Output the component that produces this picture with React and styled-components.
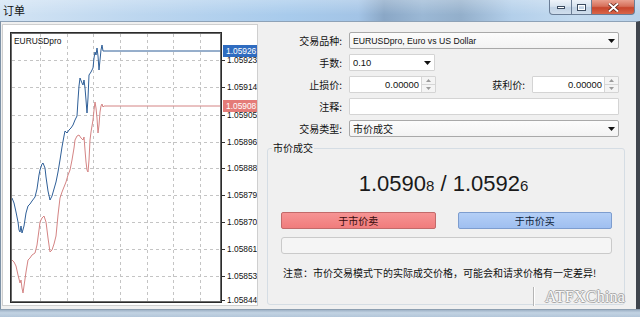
import React from "react";
import styled, { createGlobalStyle } from "styled-components";

const GlobalStyle = createGlobalStyle`
  html, body { margin: 0; padding: 0; }
  body {
    width: 640px; height: 317px; overflow: hidden;
    font-family: "Liberation Sans", "Noto Sans CJK SC", sans-serif;
    background: #b9cde0;
  }
  * { box-sizing: border-box; }
`;

const CJK = `"Noto Sans CJK SC", "Liberation Sans", sans-serif`;
const LAT = `"Liberation Sans", "Noto Sans CJK SC", sans-serif`;

const Window = styled.div`
  position: relative;
  width: 640px;
  height: 317px;
  display: flex;
  flex-direction: column;
  overflow: hidden;
  background: linear-gradient(180deg, #b7cde3 0%, #a9c0d8 100%);
`;

const TitleBar = styled.div`
  flex: none;
  height: 21px;
  display: flex;
  justify-content: space-between;
  align-items: flex-start;
  background:
    linear-gradient(180deg, rgba(255,255,255,0.25), rgba(255,255,255,0) 70%),
    linear-gradient(90deg, #d3e4f4 0%, #bcd6ef 22%, #a8cbec 45%, #a3c4e6 56%, #8aa7c6 60%, #9bb8d5 66%, #93afcb 72%, #b3cfea 80%, #c4dbf0 90%, #b9d2ea 100%);
`;

const Title = styled.div`
  font: 11px ${CJK};
  color: #111;
  padding: 3px 0 0 3px;
  line-height: 14px;
`;

const Controls = styled.div`
  display: flex;
  margin-right: 5px;
`;

const CtrlBtn = styled.div`
  width: ${(p) => p.$w}px;
  height: 15px;
  display: flex;
  align-items: center;
  justify-content: center;
  border: 1px solid #6a7d96;
  border-top: none;
  border-left: ${(p) => (p.$first ? "1px solid #6a7d96" : "none")};
  border-radius: ${(p) => (p.$first ? "0 0 0 4px" : p.$last ? "0 0 4px 0" : "0")};
  background: ${(p) =>
    p.$close
      ? "linear-gradient(180deg, #e9a08f 0%, #d6705a 45%, #c7452c 55%, #d9664a 100%)"
      : "linear-gradient(180deg, #eef3f9 0%, #d7e3ef 45%, #c2d3e5 55%, #d0deed 100%)"};
`;

const Body = styled.div`
  flex: none;
  height: 288px;
  display: flex;
  background: #f0f0f0;
  border-top: 1px solid #8ea2b7;
  border-left: 1px solid #7d91a6;
  border-right: 4px solid #3f454d;
`;

const BottomFrame = styled.div`
  flex: 1;
  background: linear-gradient(180deg, #9fb3c7 0%, #c2d3e3 40%, #b3c6d9 100%);
  border-top: 1px solid #8d9fb1;
`;

const ChartPanel = styled.div`
  flex: none;
  width: 256px;
  height: 282px;
  margin: 2px 0 0 1px;
  background: #fff;
  border: 1px solid #cfcfcf;
  svg { display: block; }
`;

const FormPanel = styled.div`
  flex: 1;
  display: flex;
  flex-direction: column;
  padding: 10px 11px 4px 9px;
`;

const Rows = styled.div`
  display: grid;
  grid-template-columns: 75px 1fr;
  column-gap: 7px;
  row-gap: 5px;
  padding-right: 6px;
`;

const Label = styled.div`
  font: 10px ${CJK};
  line-height: 17px;
  height: 17px;
  text-align: right;
  color: #111;
  white-space: nowrap;
  flex: ${(p) => (p.$grow ? 1 : "none")};
`;

const Field = styled.div`
  height: 17px;
  width: ${(p) => (p.$w ? `${p.$w}px` : "100%")};
  flex: none;
  display: flex;
  align-items: center;
  background: ${(p) => (p.$combo ? "linear-gradient(180deg, #fcfcfc, #f3f3f3)" : "#fff")};
  border: 1px solid ${(p) => (p.$combo ? "#a9a9a9" : "#d4d4d4")};
  border-radius: ${(p) => (p.$combo ? "2px" : "1px")};
  font: ${(p) => (p.$cjk ? `10px ${CJK}` : p.$num ? `9.4px ${LAT}` : `8.7px ${LAT}`)};
  color: #111;
  padding-left: 3px;
`;

const FieldText = styled.span`
  flex: 1;
  text-align: ${(p) => (p.$right ? "right" : "left")};
  padding-right: ${(p) => (p.$right ? "2px" : "0")};
  white-space: nowrap;
  overflow: hidden;
`;

const ArrowBox = styled.span`
  flex: none;
  width: 13px;
  display: flex;
  align-items: center;
  justify-content: center;
`;

const Spinner = styled.span`
  flex: none;
  width: 14px;
  height: 15px;
  display: flex;
  flex-direction: column;
  border-left: 1px solid #d6d6d6;
  background: #f4f4f4;
`;

const SpinHalf = styled.span`
  flex: 1;
  display: flex;
  align-items: center;
  justify-content: center;
  border-bottom: ${(p) => (p.$top ? "1px solid #d6d6d6" : "none")};
`;

const PairRow = styled.div`
  display: flex;
  align-items: center;
  gap: 7px;
`;

const GroupBox = styled.fieldset`
  flex: 1;
  margin: 4px 0 0 0;
  padding: 0 0 0 4px;
  border: 1px solid #d5dde4;
  border-radius: 3px;
  min-width: 0;
`;

const Legend = styled.legend`
  font: 10px ${CJK};
  line-height: 14px;
  padding: 0 1px;
  color: #111;
`;

const GroupContent = styled.div`
  display: flex;
  flex-direction: column;
  padding: 16px 12px 0 9px;
`;

const Price = styled.div`
  font: 22px ${LAT};
  line-height: 26px;
  height: 26px;
  text-align: center;
  color: #1a1a1a;
  padding-right: 6px;
`;

const Small = styled.span`
  font-size: 15px;
`;

const Buttons = styled.div`
  display: grid;
  grid-template-columns: 1fr 1fr;
  column-gap: 22px;
  margin-top: 15px;
`;

const TradeButton = styled.div`
  height: 17px;
  display: flex;
  align-items: center;
  justify-content: center;
  font: 10px ${CJK};
  color: ${(p) => (p.$sell ? "#3a0d0d" : "#0f1f3a")};
  border-radius: 2px;
  border: 1px solid ${(p) => (p.$sell ? "#c26a6a" : "#7d9dcf")};
  background: ${(p) =>
    p.$sell
      ? "linear-gradient(180deg, #f69494 0%, #f07c7c 100%)"
      : "linear-gradient(180deg, #b4cff6 0%, #9fbff0 100%)"};
`;

const Progress = styled.div`
  height: 17px;
  margin-top: 8px;
  border: 1px solid #cacaca;
  border-radius: 3px;
  background: #f5f5f5;
`;

const Note = styled.div`
  margin-top: 12px;
  padding-left: 2px;
  font: 10px ${CJK};
  line-height: 14px;
  color: #111;
  white-space: nowrap;
`;

const Watermark = styled.div`
  position: absolute;
  left: 533px;
  top: 287px;
  height: 19px;
  display: flex;
  align-items: center;
  gap: 11px;
`;

const WmBar = styled.span`
  width: 1px;
  height: 19px;
  background: #b5b5b5;
  box-shadow: 1px 0 0 #fff;
`;

const WmText = styled.span`
  font: 16px "Liberation Serif", serif;
  color: #fafafa;
  letter-spacing: 0.2px;
  text-shadow: 1px 0 0 #a8a8a8, -1px 0 0 #a8a8a8, 0 1px 0 #a8a8a8, 0 -1px 0 #a8a8a8;
`;

const DownArrow = () => (
  <svg width="7" height="4" viewBox="0 0 7 4">
    <path d="M0 0 H7 L3.5 4 Z" fill="#111" />
  </svg>
);

const SpinArrow = ({ up }) => (
  <svg width="5" height="3" viewBox="0 0 5 3">
    <path d={up ? "M0 3 H5 L2.5 0 Z" : "M0 0 H5 L2.5 3 Z"} fill="#9a9a9a" />
  </svg>
);

const SpinField = ({ value, w }) => (
  <Field $w={w} $num>
    <FieldText $right>{value}</FieldText>
    <Spinner>
      <SpinHalf $top>
        <SpinArrow up />
      </SpinHalf>
      <SpinHalf>
        <SpinArrow />
      </SpinHalf>
    </Spinner>
  </Field>
);

const blue = [
  [12, 198], [14, 203], [16, 212], [18, 222], [19, 230], [20, 232], [21, 226], [22, 233], [24, 226],
  [26, 213], [28, 206], [30, 204], [32, 201], [35, 197], [37, 189], [39, 175], [40, 170], [42, 164],
  [43, 163], [45, 168], [46, 177], [48, 191], [50, 200], [52, 196], [54, 189], [56, 182], [58, 172],
  [60, 160], [62, 147], [64, 136], [65, 131], [67, 133], [69, 130], [71, 128], [73, 125], [75, 120],
  [77, 116], [78, 100], [79, 86], [80, 78], [82, 83], [83, 85], [84, 80], [85, 88], [86, 100],
  [87, 113], [88, 98], [89, 75], [91, 72], [93, 68], [94, 58], [95, 52], [96, 55], [97, 48],
  [98, 56], [99, 70], [100, 60], [101, 50], [102, 45], [103, 51], [222, 51],
];

const red = [
  [12, 260], [14, 262], [16, 266], [18, 275], [20, 283], [21, 280], [22, 288], [23, 293], [24, 286],
  [26, 272], [28, 260], [30, 258], [32, 255], [35, 253], [37, 245], [39, 230], [40, 222], [42, 218],
  [44, 216], [46, 222], [48, 238], [50, 252], [52, 250], [54, 244], [56, 236], [58, 215], [60, 198],
  [62, 192], [64, 187], [66, 182], [68, 175], [70, 170], [72, 160], [74, 148], [75, 140], [77, 136],
  [79, 135], [81, 138], [83, 140], [84, 137], [85, 150], [86, 162], [87, 170], [88, 172], [89, 160],
  [90, 140], [91, 132], [93, 120], [94, 110], [95, 102], [96, 108], [97, 118], [98, 133], [99, 125],
  [100, 112], [101, 106], [102, 104], [103, 107], [104, 106], [222, 106],
];

const axis = [
  ["1.05923", 60], ["1.05914", 87], ["1.05905", 115], ["1.05896", 142], ["1.05888", 168],
  ["1.05879", 195], ["1.05870", 222], ["1.05861", 249], ["1.05853", 276], ["1.05844", 300],
];
const vGrid = [40, 67, 93, 120, 147, 173, 200];
const hGrid = [60, 87, 115, 142, 168, 195, 222, 249, 276];

const toPts = (arr) => arr.map(([x, y]) => `${x},${y}`).join(" ");

const Chart = () => (
  <svg width="254" height="280" viewBox="3 25 254 280">
    <rect x="3" y="25" width="254" height="280" fill="#fff" />
    {vGrid.map((x) => (
      <line key={`v${x}`} x1={x + 0.5} y1="34" x2={x + 0.5} y2="302" stroke="#c4c4c4" strokeDasharray="3 3" />
    ))}
    {hGrid.map((y) => (
      <line key={`h${y}`} x1="12" y1={y + 0.5} x2="221" y2={y + 0.5} stroke="#c4c4c4" strokeDasharray="3 3" />
    ))}
    <polyline points={toPts(red)} fill="none" stroke="#d48484" strokeWidth="1" />
    <polyline points={toPts(blue)} fill="none" stroke="#2f5f98" strokeWidth="1" />
    <rect x="10.5" y="32.5" width="211" height="270" fill="none" stroke="#2b2b2b" strokeWidth="1" />
    <rect x="11.5" y="33.5" width="209" height="268" fill="none" stroke="#6a6a6a" strokeWidth="1" />
    <text x="14" y="44" fontFamily="Liberation Sans, sans-serif" fontSize="8.4" fill="#111">EURUSDpro</text>
    {axis.map(([t, y]) => (
      <g key={t}>
        <line x1="222" y1={y + 0.5} x2="225" y2={y + 0.5} stroke="#333" />
        <text x="227" y={y + 3} fontFamily="Liberation Sans, sans-serif" fontSize="8.4" fill="#111">{t}</text>
      </g>
    ))}
    <rect x="223" y="45" width="34" height="12" fill="#2f6cc0" />
    <text x="226" y="54" fontFamily="Liberation Sans, sans-serif" fontSize="8.4" fill="#fff">1.05926</text>
    <rect x="223" y="100" width="34" height="12" fill="#e47b78" />
    <text x="226" y="109" fontFamily="Liberation Sans, sans-serif" fontSize="8.4" fill="#fff">1.05908</text>
  </svg>
);

export default function App() {
  return (
    <>
      <GlobalStyle />
      <Window>
        <TitleBar>
          <Title>订单</Title>
          <Controls>
            <CtrlBtn $w={23} $first>
              <svg width="8" height="3" viewBox="0 0 8 3">
                <rect x="0.5" y="0.5" width="7" height="2" fill="#fff" stroke="#3b4b60" />
              </svg>
            </CtrlBtn>
            <CtrlBtn $w={20}>
              <svg width="9" height="7" viewBox="0 0 9 7">
                <rect x="0.5" y="0.5" width="8" height="6" fill="none" stroke="#3b4b60" />
                <rect x="1.5" y="1.5" width="6" height="4" fill="none" stroke="#fff" />
              </svg>
            </CtrlBtn>
            <CtrlBtn $w={43} $close $last>
              <svg width="11" height="9" viewBox="0 0 11 9">
                <path d="M1 0.5 L5.5 4.5 L10 0.5 M1 8.5 L5.5 4.5 L10 8.5" stroke="#5a2015" strokeWidth="3.4" fill="none" />
                <path d="M1 0.5 L5.5 4.5 L10 0.5 M1 8.5 L5.5 4.5 L10 8.5" stroke="#fff" strokeWidth="2" fill="none" />
              </svg>
            </CtrlBtn>
          </Controls>
        </TitleBar>
        <Body>
          <ChartPanel>
            <Chart />
          </ChartPanel>
          <FormPanel>
            <Rows>
              <Label>交易品种:</Label>
              <Field $combo>
                <FieldText>EURUSDpro, Euro vs US Dollar</FieldText>
                <ArrowBox><DownArrow /></ArrowBox>
              </Field>

              <Label>手数:</Label>
              <Field $w={86} $num>
                <FieldText>0.10</FieldText>
                <ArrowBox><DownArrow /></ArrowBox>
              </Field>

              <Label>止损价:</Label>
              <PairRow>
                <SpinField value="0.00000" w={87} />
                <Label $grow>获利价:</Label>
                <SpinField value="0.00000" w={87} />
              </PairRow>

              <Label>注释:</Label>
              <Field />

              <Label>交易类型:</Label>
              <Field $combo $cjk>
                <FieldText>市价成交</FieldText>
                <ArrowBox><DownArrow /></ArrowBox>
              </Field>
            </Rows>
            <GroupBox>
              <Legend>市价成交</Legend>
              <GroupContent>
                <Price>
                  1.0590<Small>8</Small> / 1.0592<Small>6</Small>
                </Price>
                <Buttons>
                  <TradeButton $sell>于市价卖</TradeButton>
                  <TradeButton>于市价买</TradeButton>
                </Buttons>
                <Progress />
                <Note>注意：市价交易模式下的实际成交价格，可能会和请求价格有一定差异!</Note>
              </GroupContent>
            </GroupBox>
          </FormPanel>
        </Body>
        <BottomFrame />
        <Watermark>
          <WmBar />
          <WmText>ATFXChina</WmText>
        </Watermark>
      </Window>
    </>
  );
}
